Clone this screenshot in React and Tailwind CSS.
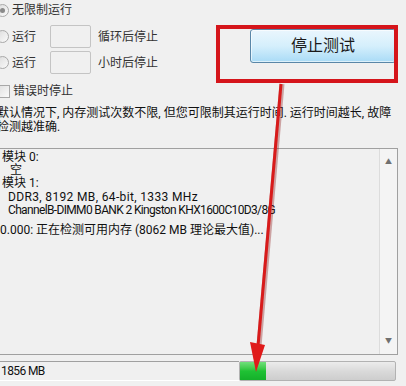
import React from 'react';

const Radio = ({ checked }) => (
    <span className='-ml-[4px] w-[13px] h-[13px] rounded-full border border-[#a8a8a8] bg-gradient-to-br from-[#dcdcdc] to-[#fafafa] flex items-center justify-center shrink-0'>
        {checked && <span className='w-[5px] h-[5px] rounded-full bg-[#8a8a8a]' />}
    </span>
);

const Box = () => (
    <span className='w-[41px] h-[23px] border border-[#c4c4c4] rounded-[2px] bg-[#f0f0f0] shrink-0' />
);

export default function App() {
    return (
        <div className='relative w-[406px] h-[386px] overflow-hidden bg-[#f0f0f0] text-[12px] text-black font-["Roboto","Noto_Sans_CJK_SC",sans-serif]'>
            <div className='flex'>
                <div className='flex flex-col text-[#333] leading-[14px]'>
                    <label className='flex items-center gap-[3px] h-[14px] mt-[3px]'>
                        <Radio checked />
                        <span>无限制运行</span>
                    </label>
                    <label className='flex items-center h-[23px] mt-[8px]'>
                        <Radio />
                        <span className='ml-[3px] w-[38px]'>运行</span>
                        <Box />
                        <span className='ml-[7px]'>循环后停止</span>
                    </label>
                    <label className='flex items-center h-[23px] mt-[3px]'>
                        <Radio />
                        <span className='ml-[3px] w-[38px]'>运行</span>
                        <Box />
                        <span className='ml-[7px]'>小时后停止</span>
                    </label>
                    <label className='flex items-center gap-[3px] h-[14px] mt-[10px]'>
                        <span className='-ml-[3px] w-[13px] h-[13px] border border-[#a8a8a8] bg-gradient-to-br from-[#e0e0e0] to-[#fbfbfb] shrink-0' />
                        <span>错误时停止</span>
                    </label>
                </div>
                <div className='ml-auto mr-[10px] mt-[29px]'>
                    <button className='w-[146px] h-[34px] rounded-[3px] border border-[#5a87a8] bg-gradient-to-b from-[#eaf6fd] via-[#d5effc] to-[#a9dbf6] text-[16px] text-[#1a1a1a] shadow-[inset_0_0_0_1px_rgba(255,255,255,0.6)]'>
                        停止测试
                    </button>
                </div>
            </div>

            <p className='-ml-[3px] mt-[8px] leading-[14px] text-[#111] whitespace-nowrap'>
                默认情况下, 内存测试次数不限, 但您可限制其运行时间. 运行时间越长, 故障<br />
                检测越准确.
            </p>

            <div className='-ml-[2px] mt-[14px] w-[400px] h-[207px] border-t border-r border-b border-[#a0a0a0] flex'>
                <div className='flex-1 pl-[4px] pt-[2px] leading-[13px] text-[#111] whitespace-nowrap'>
                    <div>模块 0:</div>
                    <div className='pl-[8px]'>空</div>
                    <div>模块 1:</div>
                    <div className='pl-[6px] mt-[1px] tracking-[0.35px]'>DDR3, 8192 MB, 64-bit, 1333 MHz</div>
                    <div className='pl-[6px] tracking-[-0.65px]'>ChannelB-DIMM0 BANK 2 Kingston KHX1600C10D3/8G</div>
                    <div className='mt-[7px] -ml-[2px]'>0.000: 正在检测可用内存 (8062 MB 理论最大值)...</div>
                </div>
                <div className='w-[18px] border-l border-[#dcdcdc] bg-[#f4f4f4] flex flex-col items-center justify-between py-[8px] text-[7px] text-[#707070]'>
                    <span>▲</span>
                    <span>▼</span>
                </div>
            </div>

            <div className='flex mt-[6px] h-[20px]'>
                <div className='w-[239px] border-t border-[#a0a0a0] border-b border-b-white pl-[1px] leading-[18px] text-[#111] tracking-[-0.6px]'>
                    1856 MB
                </div>
                <div className='w-[157px] h-[20px] border border-[#b2b2b2] rounded-[2px] bg-gradient-to-b from-[#ececec] via-[#dadada] to-[#cdcdcd] flex'>
                    <div className='w-[26px] h-full bg-gradient-to-b from-[#6fe07a] via-[#1fc234] to-[#14b02a]' />
                </div>
            </div>

            <div className='absolute left-[216px] top-[25px] w-[182px] h-[58px] border-4 border-[#d5151b]' />

            <svg className='absolute left-0 top-0' width='406' height='386' viewBox='0 0 406 386'>
                <path d='M282 84 L259 346' stroke='#8a1010' strokeOpacity='0.35' strokeWidth='5' fill='none' />
                <path d='M281 84 L258 346' stroke='#d81a1a' strokeWidth='3' fill='none' />
                <polygon points='250,342 265,345 256,372' fill='#e01b1b' />
            </svg>
        </div>
    );
}
